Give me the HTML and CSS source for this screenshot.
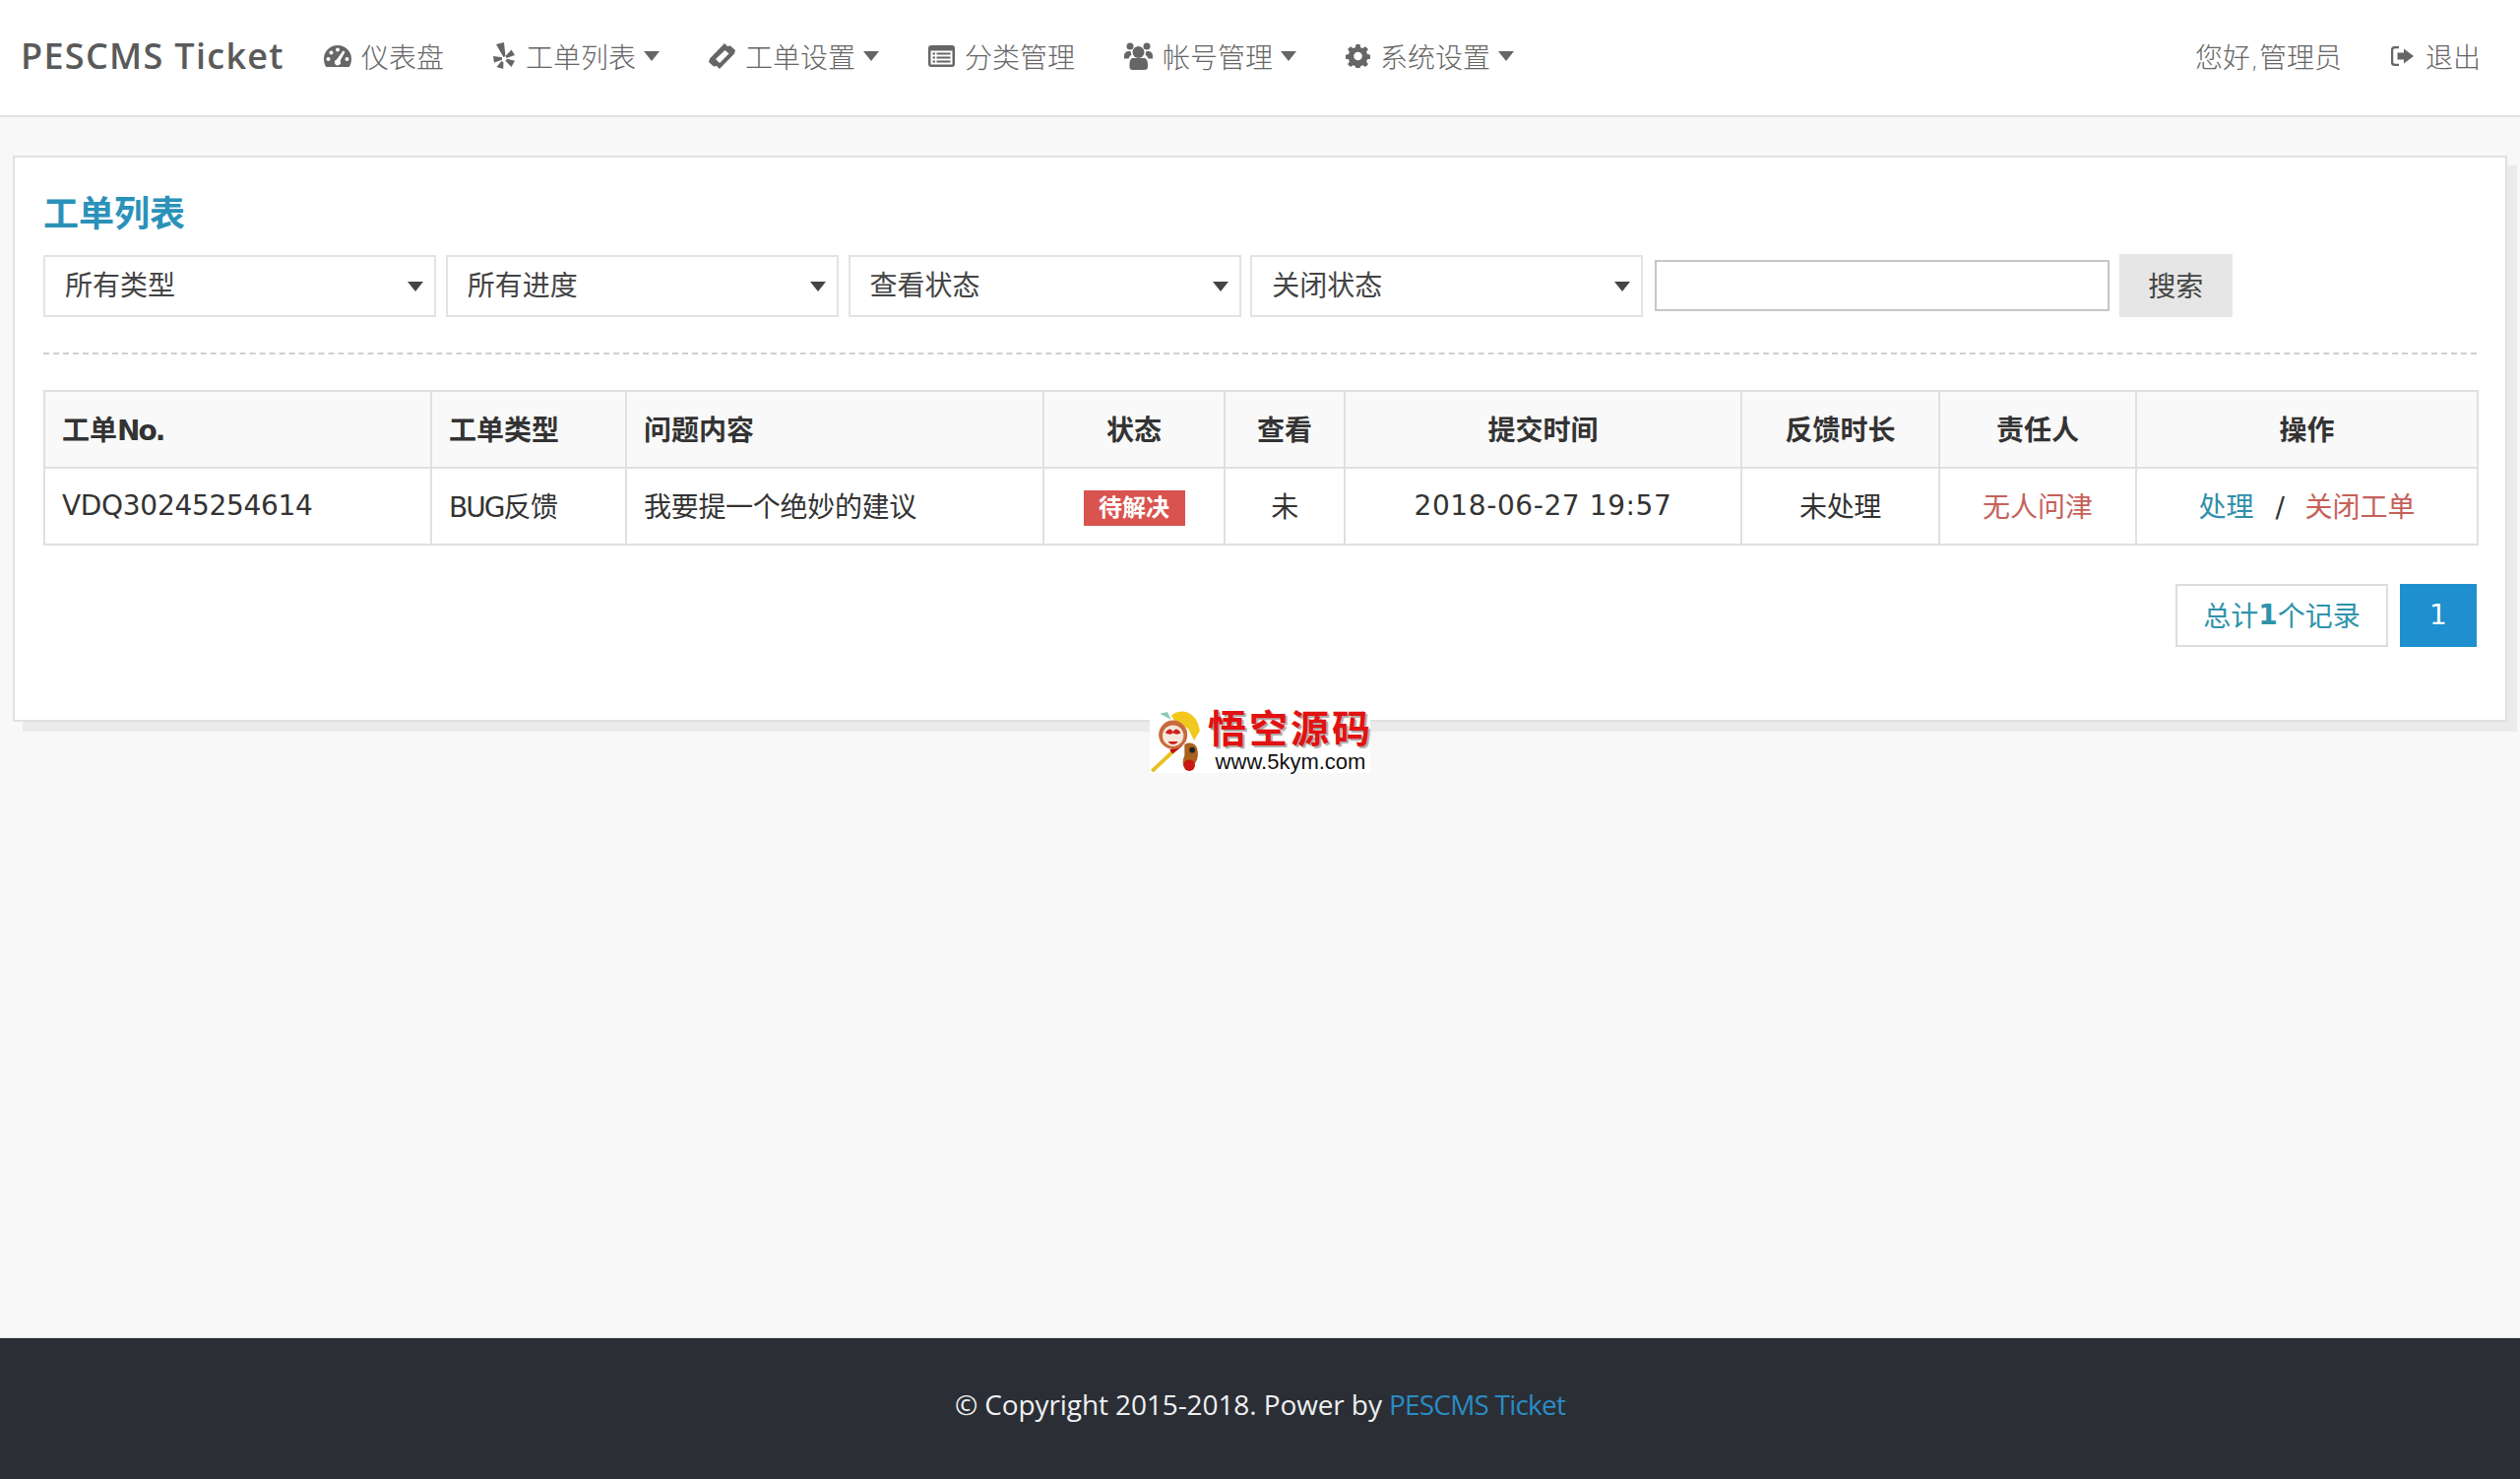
FILE: index.html
```html
<!DOCTYPE html>
<html lang="zh-CN">
<head>
<meta charset="utf-8">
<title>PESCMS Ticket</title>
<link rel="stylesheet" href="styles.css">
</head>
<body>
<header class="topbar">
  <a class="brand">PESCMS Ticket</a>
  <nav class="nav">
    <a class="nav-item"><svg class="ic ic-gauge" viewBox="0 0 28 22"><path class="solid" d="M14 0A14 14 0 0 0 0 14c0 3 .8 5.800 2.300 8h23.400c1.500-2.200 2.300-5 2.300-8A14 14 0 0 0 14 0z"/><g class="knock"><circle cx="14" cy="4.500" r="2"/><circle cx="7.500" cy="7.500" r="2"/><circle cx="4.500" cy="14" r="2"/><circle cx="23.500" cy="14" r="2"/><path d="M19.500 5.500l2 1.200-5 9a3 3 0 1 1-3.500-1.300z"/></g></svg>仪表盘</a>
    <a class="nav-item"><svg class="ic ic-yelp" viewBox="0 0 22 27"><path class="solid" d="M3 2L11 0l1.500 14-2 1zM0 14l1 6.500 8-2.800v-2.400zM8.500 19l2 1.200-.3 6.800L3.500 25zM13.500 16l-1-2 6-6.500 3.500 5.500zM12.500 18.800l1.700-2 7.800 2-3.500 6.200z"/></svg>工单列表<i class="caret"></i></a>
    <a class="nav-item"><svg class="ic ic-ticket" viewBox="0 0 27 26"><path class="solid" d="M16 0l3 3 3-.5L27 7l-1 3.500L11 26l-3-3-3 .5L0 19l1-3.500z"/><path class="knock" d="M16.500 7l4 3.500-9.500 9.500-4-4z"/></svg>工单设置<i class="caret"></i></a>
    <a class="nav-item"><svg class="ic ic-list" viewBox="0 0 27 22"><rect class="solid" width="27" height="22" rx="3"/><rect class="knock" x="2.500" y="5.500" width="22" height="14"/><path class="solid" d="M4.500 7.500h2.500v2H4.500zM8.500 7.500h14v2h-14zM4.500 11.500h2.500v2H4.500zM8.500 11.500h14v2h-14zM4.500 15.500h2.500v2H4.500zM8.500 15.500h14v2h-14z"/></svg>分类管理</a>
    <a class="nav-item"><svg class="ic ic-users" viewBox="0 0 29 28"><g class="solid"><circle cx="14.500" cy="10" r="6"/><circle cx="6" cy="4" r="3.500"/><circle cx="23" cy="4" r="3.500"/><path d="M5 9c-3 0-5 1.500-5 5v2.500h4.500c.6-2 2-3.200 3-3.800A7 7 0 0 1 6.800 9.300zM24 9c3 0 5 1.500 5 5v2.500h-4.500c-.6-2-2-3.200-3-3.800a7 7 0 0 0 .7-3.400zM8 16h13c1.800 1 3 3 3 6v3c0 2-1.500 3-3.500 3h-12C6.500 28 5.500 27 5.500 25v-3c0-3 1-5 2.500-6z"/></g></svg>帐号管理<i class="caret"></i></a>
    <a class="nav-item"><svg class="ic ic-cog" viewBox="0 0 25 24"><path class="solid" d="M10.500 0h4l.6 3.200 2.300.9L20.100 2.300l2.800 2.800-1.800 2.700.9 2.300 3 .6v4l-3 .6-.9 2.300 1.800 2.700-2.800 2.800-2.700-1.800-2.300.9-.6 3h-4l-.6-3-2.300-.9-2.700 1.800-2.800-2.800 1.800-2.700-.9-2.300-3-.6v-4l3-.6.9-2.300L2.100 5.100l2.800-2.800 2.700 1.800 2.300-.9z"/><circle class="knock" cx="12.500" cy="12" r="4.300"/></svg>系统设置<i class="caret"></i></a>
  </nav>
  <div class="user-nav">
    <span class="nav-item">您好,管理员</span>
    <a class="nav-item"><svg class="ic ic-exit" viewBox="0 0 23 20"><path class="solid" d="M8 0H3.500A3.500 3.500 0 0 0 0 3.500v13A3.500 3.500 0 0 0 3.500 20H8v-2.200H4a1.800 1.800 0 0 1-1.800-1.800V4A1.800 1.800 0 0 1 4 2.200h4zM13 2.500L23 10l-10 7.500V13.500H6.500v-7H13z"/></svg>退出</a>
  </div>
</header>

<main class="main">
  <section class="panel">
    <h1 class="title">工单列表</h1>
    <form class="filters">
      <div class="select"><select class="select-input"><option>所有类型</option></select></div>
      <div class="select"><select class="select-input"><option>所有进度</option></select></div>
      <div class="select"><select class="select-input"><option>查看状态</option></select></div>
      <div class="select"><select class="select-input"><option>关闭状态</option></select></div>
      <input class="search" type="text">
      <button class="search-btn" type="button">搜索</button>
    </form>
    <hr class="divider">
    <table class="tickets">
      <colgroup>
        <col class="c1"><col class="c2"><col class="c3"><col class="c4"><col class="c5"><col class="c6"><col class="c7"><col class="c8"><col class="c9">
      </colgroup>
      <thead>
        <tr>
          <th>工单<span class="tight">No.</span></th><th>工单类型</th><th>问题内容</th>
          <th class="mid">状态</th><th class="mid">查看</th><th class="mid">提交时间</th><th class="mid">反馈时长</th><th class="mid">责任人</th><th class="mid">操作</th>
        </tr>
      </thead>
      <tbody>
        <tr>
          <td>VDQ30245254614</td><td><span class="tight">BUG</span>反馈</td><td>我要提一个绝妙的建议</td>
          <td class="mid"><span class="badge">待解决</span></td>
          <td class="mid">未</td>
          <td class="mid date">2018-06-27 19:57</td>
          <td class="mid">未处理</td>
          <td class="mid"><a class="red">无人问津</a></td>
          <td class="mid"><a class="teal">处理</a><span class="sep">/</span><a class="red">关闭工单</a></td>
        </tr>
      </tbody>
    </table>
    <div class="pager">
      <span class="pager-total">总计<b>1</b>个记录</span>
      <span class="pager-page">1</span>
    </div>
  </section>
  <div class="watermark">
    <svg class="wm-monkey" viewBox="0 0 60 68">
      <path d="M2 66L32 38" stroke="#e8c020" stroke-width="4" fill="none"/>
      <path d="M22 46L32 38" stroke="#c01010" stroke-width="5" fill="none"/>
      <path d="M10 6L22 12 18 4z" fill="#8cc8b8"/>
      <path d="M22 8C34 -2 50 6 52 24L46 34 40 22 26 14z" fill="#f2c81e"/>
      <circle cx="24" cy="28" r="15" fill="#c96a3c"/>
      <circle cx="24" cy="29" r="11" fill="#f4e8dc"/>
      <path d="M16 26c3-5 6-5 8-1 2-4 5-4 8 1-3 2-5 2-8 0-2 2-5 2-8 0zM19 35h10c-1 4-9 4-10 0z" fill="#d0201c"/>
      <path d="M36 38c8-4 14 0 14 10s-6 14-12 14c-5 0-4-8-2-12z" fill="#a8621e"/>
      <circle cx="41" cy="60" r="6" fill="#c81810"/>
      <circle cx="44" cy="44" r="3" fill="#222"/>
    </svg>
    <div class="wm-text">
      <div class="wm-name">悟空源码</div>
      <div class="wm-url">www.5kym.com</div>
    </div>
  </div>
</main>

<footer class="footer">
  <span>© Copyright 2015-2018. Power by <a class="footer-link">PESCMS Ticket</a></span>
</footer>
</body>
</html>
```
FILE: styles.css
```css
* { box-sizing: border-box; }
html, body { margin: 0; padding: 0; }
body {
  min-height: 100vh;
  display: flex;
  flex-direction: column;
  background: #f8f8f8;
  color: #444;
  font-family: "DejaVu Sans", "Noto Sans CJK SC", sans-serif;
  font-size: 28px;
  letter-spacing: -0.3px;
}

/* top bar */
.topbar {
  height: 119px;
  flex: none;
  display: flex;
  align-items: center;
  padding: 0 15px 4px 21px;
  background: #fff;
  border-bottom: 2px solid #e3e3e3;
}
.brand {
  width: 267px;
  margin-right: 16px;
  font-family: "Open Sans", sans-serif;
  font-size: 36px;
  font-weight: 600;
  color: #5a5a5a;
  letter-spacing: 1.3px;
  white-space: nowrap;
}
.nav, .user-nav { display: flex; align-items: center; }
.user-nav { margin-left: auto; }
.nav-item {
  display: flex;
  align-items: center;
  padding: 0 25px;
  color: #666;
  font-weight: 300;
  letter-spacing: 0;
  white-space: nowrap;
}
.ic { flex: none; margin-right: 10px; }
.solid { fill: #666; }
.knock { fill: #fff; }
.ic-gauge { width: 28px; height: 22px; }
.ic-yelp { width: 22px; height: 27px; margin-right: 11px; }
.ic-ticket { width: 27px; height: 26px; }
.ic-list { width: 27px; height: 22px; }
.ic-users { width: 29px; height: 28px; }
.ic-cog { width: 25px; height: 24px; }
.ic-exit { width: 23px; height: 20px; margin-right: 12px; }
.caret {
  width: 0;
  height: 0;
  margin-left: 8px;
  border-style: solid;
  border-width: 10px 8.5px 0;
  border-color: #666 transparent transparent;
}

/* main panel */
.main { flex: 1; position: relative; padding: 39px 0 0 13px; }
.panel {
  width: 2534px;
  padding: 33px 29px 74px 29px;
  background: #fff;
  border: 2px solid #e1e1e1;
  box-shadow: 10px 10px 0 #ebebeb;
}
.title {
  margin: 0 0 15px;
  font-size: 36px;
  line-height: 50px;
  font-weight: 700;
  color: #2a92b9;
  letter-spacing: 0;
}

/* filter row */
.filters { display: flex; align-items: center; gap: 9.75px; height: 64px; }
.select { position: relative; width: 399px; height: 63px; }
.select::after {
  content: "";
  position: absolute;
  right: 13px;
  top: 27px;
  border-style: solid;
  border-width: 10px 8px 0;
  border-color: #444 transparent transparent;
  pointer-events: none;
}
.select-input {
  appearance: none;
  width: 100%;
  height: 100%;
  padding: 0 0 0 20px;
  background: #fff;
  border: 2px solid #e3e3e3;
  border-radius: 0;
  color: #444;
  font: inherit;
  letter-spacing: 0;
}
.search {
  width: 462px;
  height: 52px;
  margin-left: 2px;
  background: #fff;
  border: 2px solid #c6c6c6;
  border-radius: 0;
}
.search-btn {
  width: 115px;
  height: 64px;
  padding: 0 0 3px;
  border: 0;
  background: #e6e6e6;
  color: #444;
  font: inherit;
  letter-spacing: 0;
}
.divider {
  height: 0;
  margin: 36px 0;
  border: 0;
  border-top: 2px dashed #cfcfcf;
}

/* table */
.tickets {
  width: 2472px;
  border-collapse: collapse;
  table-layout: fixed;
  color: #333;
}
.c1 { width: 393px; }
.c2 { width: 198px; }
.c3 { width: 424px; }
.c4 { width: 184px; }
.c5 { width: 122px; }
.c6 { width: 403px; }
.c7 { width: 201px; }
.c8 { width: 200px; }
.c9 { width: 347px; }
.tickets th, .tickets td {
  height: 78px;
  padding: 0 17px 2px;
  border: 2px solid #e0e0e0;
  text-align: left;
  white-space: nowrap;
}
.tickets th { background: #f9f9f9; font-weight: 700; letter-spacing: 0; }
.tickets .mid { text-align: center; }
.tickets .date { letter-spacing: 0.6px; }
.tight { letter-spacing: -2px; }
.badge {
  display: inline-block;
  width: 103px;
  height: 36px;
  margin-top: 5px;
  background: #d9534f;
  color: #fff;
  font-size: 24px;
  font-weight: 700;
  line-height: 36px;
  letter-spacing: 0;
  vertical-align: middle;
}
.red { color: #c5615a; letter-spacing: 0; }
.teal { color: #2f90aa; letter-spacing: 0; }
.sep { margin: 0 21px 0 22px; }

/* pagination */
.pager { display: flex; justify-content: flex-end; gap: 12px; margin-top: 39px; }
.pager-total, .pager-page {
  display: flex;
  align-items: center;
  justify-content: center;
  height: 64px;
  padding-bottom: 2px;
  letter-spacing: 0;
}
.pager-total { width: 216px; border: 2px solid #ddd; color: #2f93ab; }
.pager-page { width: 78px; background: #1e8fcf; color: #fff; }

/* watermark image stand-in, laid over the page */
.watermark {
  position: absolute;
  left: 1168px;
  top: 600px;
  width: 224px;
  height: 66px;
  display: flex;
  background: #fff;
}
.wm-monkey { width: 59px; height: 66px; flex: none; }
.wm-text { display: flex; flex-direction: column; align-items: center; }
.wm-name {
  font-size: 39px;
  line-height: 44px;
  font-weight: 700;
  color: #e21212;
  letter-spacing: 3px;
  white-space: nowrap;
  text-shadow: 2px 2px 1px #aaa;
}
.wm-url {
  font-family: "Liberation Sans", sans-serif;
  font-size: 22px;
  line-height: 22px;
  color: #111;
  letter-spacing: 0;
}

/* footer */
.footer {
  height: 144px;
  flex: none;
  display: flex;
  align-items: center;
  justify-content: center;
  padding-bottom: 9px;
  background: #2b2e35;
  border-top: 1px solid #e6e6e6;
  color: #eef0f2;
  font-family: "Open Sans", sans-serif;
  letter-spacing: -0.1px;
}
.footer-link { color: #2a8cc4; letter-spacing: -0.8px; }
```
